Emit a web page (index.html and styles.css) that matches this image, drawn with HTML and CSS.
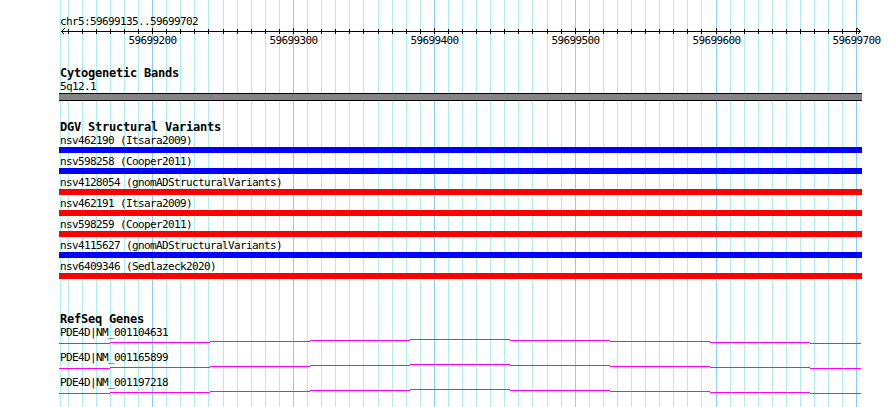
FILE: index.html
```html
<!doctype html>
<html lang="en">
    <head>
        <meta charset="UTF-8" />
        <title>chr5:59699135..59699702</title>
        <link rel="stylesheet" href="styles.css">
    </head>
    <body>
        <div class="browser">
            <!-- grid lines, filled in by the script below -->
            <svg class="grid" id="grid" width="890" height="407"></svg>

            <div class="tracks">
                <!-- Ruler -->
                <div class="ruler">
                    <div class="label">chr5:59699135..59699702</div>
                    <svg class="scale" id="scale" width="890" height="20">
                        <path d="M61 3.5H861" />
                        <polyline points="64.5,0.5 61.5,3.5 64.5,6.5" />
                        <polyline points="857.5,0.5 860.5,3.5 857.5,6.5" />
                    </svg>
                </div>

                <!-- Cytogenetic Bands -->
                <section class="track track-bands">
                    <h2 class="track-title">Cytogenetic Bands</h2>
                    <div class="label">5q12.1</div>
                    <div class="band"></div>
                </section>

                <!-- DGV Structural Variants -->
                <section class="track track-dgv">
                    <h2 class="track-title">DGV Structural Variants</h2>
                    <div class="feature">
                        <div class="label">nsv462190 (Itsara2009)</div>
                        <div class="bar gain"></div>
                    </div>
                    <div class="feature">
                        <div class="label">nsv598258 (Cooper2011)</div>
                        <div class="bar gain"></div>
                    </div>
                    <div class="feature">
                        <div class="label">nsv4128054 (gnomADStructuralVariants)</div>
                        <div class="bar loss"></div>
                    </div>
                    <div class="feature">
                        <div class="label">nsv462191 (Itsara2009)</div>
                        <div class="bar loss"></div>
                    </div>
                    <div class="feature">
                        <div class="label">nsv598259 (Cooper2011)</div>
                        <div class="bar loss"></div>
                    </div>
                    <div class="feature">
                        <div class="label">nsv4115627 (gnomADStructuralVariants)</div>
                        <div class="bar gain"></div>
                    </div>
                    <div class="feature">
                        <div class="label">nsv6409346 (Sedlazeck2020)</div>
                        <div class="bar loss"></div>
                    </div>
                </section>

                <!-- RefSeq Genes -->
                <section class="track track-genes">
                    <h2 class="track-title">RefSeq Genes</h2>
                    <div class="gene">
                        <div class="label">PDE4D|NM_001104631</div>
                        <svg class="intron" width="890" height="12">
                            <path d="M59 4.5H110M110 3.5H210M210 2.5H310M310 1.5H410M410 0.5H510M510 1.5H610M610 2.5H710M710 3.5H810M810 4.5H861" />
                        </svg>
                    </div>
                    <div class="gene">
                        <div class="label">PDE4D|NM_001165899</div>
                        <svg class="intron" width="890" height="12">
                            <path d="M59 4.5H110M110 3.5H210M210 2.5H310M310 1.5H410M410 0.5H510M510 1.5H610M610 2.5H710M710 3.5H810M810 4.5H861" />
                        </svg>
                    </div>
                    <div class="gene">
                        <div class="label">PDE4D|NM_001197218</div>
                        <svg class="intron" width="890" height="12">
                            <path d="M59 4.5H110M110 3.5H210M210 2.5H310M310 1.5H410M410 0.5H510M510 1.5H610M610 2.5H710M710 3.5H810M810 4.5H861" />
                        </svg>
                    </div>
                </section>
            </div>
        </div>

        <script>
            const SVG_NS = "http://www.w3.org/2000/svg";

            // bp position -> pixel column
            function toPx(pos) {
                return Math.round(60.6 + (pos - 59699135) * 1.4085);
            }

            function addLine(svg, x, y1, y2, cls) {
                const line = document.createElementNS(SVG_NS, "line");
                line.setAttribute("x1", x + 0.5);
                line.setAttribute("x2", x + 0.5);
                line.setAttribute("y1", y1);
                line.setAttribute("y2", y2);
                if (cls) line.setAttribute("class", cls);
                svg.appendChild(line);
            }

            const grid = document.getElementById("grid");
            const scale = document.getElementById("scale");

            addLine(grid, 60, 0, 407, "minor");

            for (let pos = 59699140; pos <= 59699700; pos += 10) {
                const x = toPx(pos);
                const major = pos % 100 === 0;

                addLine(grid, x, 0, 407, major ? "major" : "minor");
                addLine(scale, x, major ? 0 : 1, 6);

                if (major) {
                    const label = document.createElementNS(SVG_NS, "text");
                    label.setAttribute("x", x + 0.5);
                    label.setAttribute("y", 16);
                    label.textContent = pos;
                    scale.appendChild(label);
                }
            }
        </script>
    </body>
</html>
```

FILE: styles.css
```css
body {
    margin: 0;
    background-color: #fff;
    font-family: "DejaVu Sans Mono", monospace;
    color: #000;
}

.browser {
    position: relative;
    width: 890px;
    height: 407px;
    overflow: hidden;
}

/* Grid behind the tracks */
.grid {
    position: absolute;
    top: 0;
    left: 0;
    shape-rendering: crispEdges;
}

.grid .minor {
    stroke: #afeeee;
}

.grid .major {
    stroke: #87cefa;
}

.tracks {
    position: relative;
    padding-top: 15px;
}

/* Small feature labels (6px per character) */
.label {
    padding-left: 60px;
    height: 13px;
    font-size: 11px;
    line-height: 13px;
    letter-spacing: -0.62px;
    white-space: nowrap;
}

.track-title {
    margin: 0;
    padding-left: 60px;
    height: 13px;
    font-size: 12px;
    font-weight: bold;
    line-height: 13px;
    letter-spacing: -0.22px;
    white-space: nowrap;
}

/* Ruler */
.scale {
    display: block;
    shape-rendering: crispEdges;
}

.scale path,
.scale polyline,
.scale line {
    stroke: #000;
    stroke-width: 1;
    fill: none;
}

.scale text {
    font-family: "DejaVu Sans Mono", monospace;
    font-size: 11px;
    letter-spacing: -0.62px;
    text-anchor: middle;
    fill: #000;
}

/* Track spacing */
.track-bands {
    margin-top: 19px;
}

.track-dgv {
    margin-top: 20px;
}

.track-genes {
    margin-top: 34px;
}

.band {
    margin-left: 59px;
    width: 803px;
    height: 6px;
    background-color: #848484;
    border-top: 1px solid #000;
    border-bottom: 1px solid #000;
}

.feature {
    margin-bottom: 2px;
}

.bar {
    margin-left: 59px;
    width: 803px;
    height: 6px;
}

.bar.gain {
    background-color: #0000ff;
}

.bar.loss {
    background-color: #ff0000;
}

/* Gene model: intron hat */
.intron {
    display: block;
    shape-rendering: crispEdges;
}

.intron path {
    stroke: #ff00ff;
    stroke-width: 1;
    fill: none;
}
```
